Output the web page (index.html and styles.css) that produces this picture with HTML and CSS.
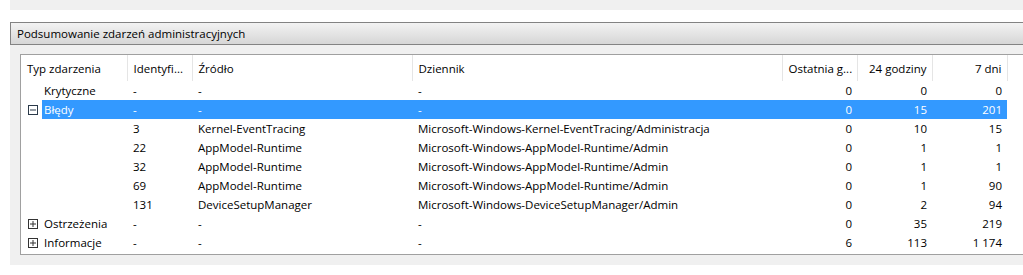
FILE: index.html
```html
<!DOCTYPE html>
<html lang="pl">
<head>
  <meta charset="UTF-8">
  <title>Podsumowanie zdarzeń administracyjnych</title>
  <link rel="stylesheet" href="styles.css">
</head>
<body>

  <div class="pasek"></div>

  <div class="sekcja">
    <div class="tytul">Podsumowanie zdarzeń administracyjnych</div>

    <div class="tresc">
      <div class="lista">
        <table id="tabelaZdarzen">
          <colgroup>
            <col style="width:106px">
            <col style="width:65px">
            <col style="width:220px">
            <col style="width:370px">
            <col style="width:75px">
            <col style="width:75px">
            <col style="width:75px">
            <col>
          </colgroup>
          <thead>
            <tr>
              <th>Typ zdarzenia</th>
              <th>Identyfi...</th>
              <th>Źródło</th>
              <th>Dziennik</th>
              <th class="liczba">Ostatnia g...</th>
              <th class="liczba">24 godziny</th>
              <th class="liczba">7 dni</th>
              <th class="pusta"></th>
            </tr>
          </thead>
          <tbody>
            <tr>
              <td class="typ"><span class="wezel"></span><span class="etykieta">Krytyczne</span></td>
              <td>-</td><td>-</td><td>-</td>
              <td class="liczba">0</td><td class="liczba">0</td><td class="liczba">0</td><td></td>
            </tr>
            <tr class="wybrany">
              <td class="typ">
                <span class="wezel"><svg width="10" height="10" viewBox="0 0 10 10"><rect x="0.5" y="0.5" width="9" height="9" fill="none" stroke="#2b3a4a"/><path d="M2 5h6" stroke="#2b3a4a"/></svg></span><span class="etykieta">Błędy</span>
              </td>
              <td>-</td><td>-</td><td>-</td>
              <td class="liczba">0</td><td class="liczba">15</td><td class="liczba">201</td><td class="pusta"></td>
            </tr>
            <tr>
              <td class="typ"></td>
              <td>3</td><td>Kernel-EventTracing</td><td>Microsoft-Windows-Kernel-EventTracing/Administracja</td>
              <td class="liczba">0</td><td class="liczba">10</td><td class="liczba">15</td><td></td>
            </tr>
            <tr>
              <td class="typ"></td>
              <td>22</td><td>AppModel-Runtime</td><td>Microsoft-Windows-AppModel-Runtime/Admin</td>
              <td class="liczba">0</td><td class="liczba">1</td><td class="liczba">1</td><td></td>
            </tr>
            <tr>
              <td class="typ"></td>
              <td>32</td><td>AppModel-Runtime</td><td>Microsoft-Windows-AppModel-Runtime/Admin</td>
              <td class="liczba">0</td><td class="liczba">1</td><td class="liczba">1</td><td></td>
            </tr>
            <tr>
              <td class="typ"></td>
              <td>69</td><td>AppModel-Runtime</td><td>Microsoft-Windows-AppModel-Runtime/Admin</td>
              <td class="liczba">0</td><td class="liczba">1</td><td class="liczba">90</td><td></td>
            </tr>
            <tr>
              <td class="typ"></td>
              <td>131</td><td>DeviceSetupManager</td><td>Microsoft-Windows-DeviceSetupManager/Admin</td>
              <td class="liczba">0</td><td class="liczba">2</td><td class="liczba">94</td><td></td>
            </tr>
            <tr>
              <td class="typ">
                <span class="wezel"><svg width="10" height="10" viewBox="0 0 10 10"><rect x="0.5" y="0.5" width="9" height="9" fill="none" stroke="#333"/><path d="M2 5h6M5 2v6" stroke="#333"/></svg></span><span class="etykieta">Ostrzeżenia</span>
              </td>
              <td>-</td><td>-</td><td>-</td>
              <td class="liczba">0</td><td class="liczba">35</td><td class="liczba">219</td><td></td>
            </tr>
            <tr>
              <td class="typ">
                <span class="wezel"><svg width="10" height="10" viewBox="0 0 10 10"><rect x="0.5" y="0.5" width="9" height="9" fill="none" stroke="#333"/><path d="M2 5h6M5 2v6" stroke="#333"/></svg></span><span class="etykieta">Informacje</span>
              </td>
              <td>-</td><td>-</td><td>-</td>
              <td class="liczba">6</td><td class="liczba">113</td><td class="liczba">1 174</td><td></td>
            </tr>
          </tbody>
        </table>
      </div>
    </div>
  </div>

</body>
</html>
```

FILE: styles.css
```css
body { margin: 0; background: #fff; font-family: "Open Sans", "Noto Sans", sans-serif; font-size: 11.5px; color: #000; }
.pasek { margin-left: 10px; height: 10px; background: #f0f0f0; }
.sekcja { margin-top: 12px; margin-left: 10px; }
.tytul { height: 21px; line-height: 21px; padding-left: 6px; border: 1px solid #838383; border-right: none; background: linear-gradient(#f3f3f3, #d6d6d6); }
.tresc { background: #f0f0f0; padding: 9px 0 10px 10px; }
.lista { background: #fff; border: 1px solid #a0a0a0; border-right: none; padding-bottom: 2px; }
table { width: 100%; table-layout: fixed; border-collapse: collapse; }
th { height: 26px; padding: 0 6px; font-weight: normal; text-align: left; white-space: nowrap; border-right: 1px solid #e5e5e5; }
th.pusta { border-right: none; }
td { height: 19px; padding: 0 6px; white-space: nowrap; }
.liczba { text-align: right; padding-right: 5px; }
td.typ { padding: 0; }
.wezel { display: inline-block; width: 21px; padding-left: 7px; box-sizing: border-box; vertical-align: middle; line-height: 0; }
.etykieta { display: inline-block; width: 85px; height: 19px; line-height: 19px; padding-left: 2px; box-sizing: border-box; vertical-align: middle; }
.wezel:empty { height: 19px; }
tr.wybrany td { background: #3399ff; color: #fff; }
tr.wybrany td.typ { background: #fff; }
tr.wybrany .etykieta { background: #3399ff; color: #fff; }
tr.wybrany td.pusta { background: #fff; }
```
